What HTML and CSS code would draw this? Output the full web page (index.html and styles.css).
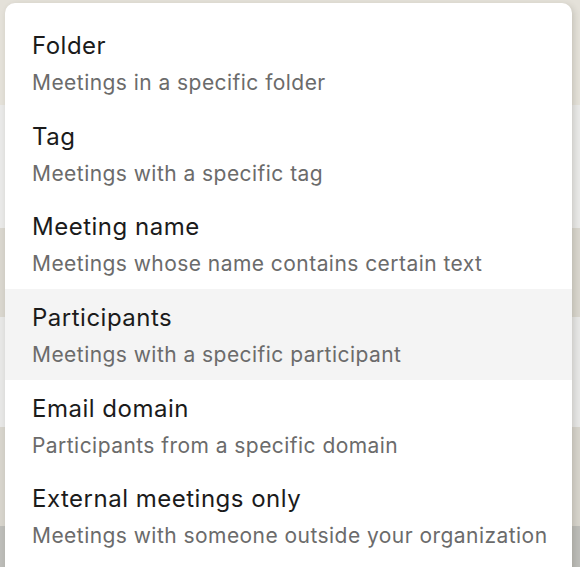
FILE: index.html
```html
<!DOCTYPE html>
<html lang="en">
<head>
  <meta charset="UTF-8">
  <meta name="viewport" content="width=device-width, initial-scale=1.0">
  <title>Filter menu</title>
  <link rel="stylesheet" href="styles.css">
</head>
<body>
  <div class="backdrop">
    <div class="band b1"></div>
    <div class="band b2"></div>
    <div class="band b3"></div>
    <div class="band b4"></div>
    <div class="band b5"></div>
    <div class="band b6"></div>
  </div>

  <ul class="menu">
    <li class="item">
      <div class="title">Folder</div>
      <div class="desc">Meetings in a specific folder</div>
    </li>
    <li class="item">
      <div class="title">Tag</div>
      <div class="desc">Meetings with a specific tag</div>
    </li>
    <li class="item">
      <div class="title">Meeting name</div>
      <div class="desc">Meetings whose name contains certain text</div>
    </li>
    <li class="item active">
      <div class="title">Participants</div>
      <div class="desc">Meetings with a specific participant</div>
    </li>
    <li class="item">
      <div class="title">Email domain</div>
      <div class="desc">Participants from a specific domain</div>
    </li>
    <li class="item">
      <div class="title">External meetings only</div>
      <div class="desc">Meetings with someone outside your organization</div>
    </li>
  </ul>
</body>
</html>
```

FILE: styles.css
```css
body {
  margin: 0;
  padding: 0;
  height: 567px;
  overflow: hidden;
  background: #e3e0d8;
  font-family: Inter, "Noto Sans", sans-serif;
  position: relative;
}

.backdrop {
  display: flex;
  flex-direction: column;
  height: 100%;
}

.band {
  width: 100%;
}

.b1 { height: 105px; background: #e4e1d9; }
.b2 { height: 123px; background: #e9e9e8; }
.b3 { height: 89px;  background: #d9d6ce; }
.b4 { height: 110px; background: #e7e7e6; }
.b5 { height: 99px;  background: #d7d4cc; }
.b6 { flex: 1;       background: #bdbdb9; }

/* dropdown sits over the page */
.menu {
  position: absolute;
  top: 3px;
  left: 5px;
  width: 567px;
  margin: 0;
  padding: 14px 0 20px;
  list-style: none;
  background: #fff;
  border-radius: 10px;
  box-shadow: 2px 2px 6px rgba(60, 55, 40, 0.18);
}

.item {
  height: 90.67px;
  padding: 13px 27px 0;
  box-sizing: border-box;
  white-space: nowrap;
}

.item.active {
  background: #f4f4f4;
}

.title {
  font-size: 24px;
  line-height: 32px;
  letter-spacing: 0.5px;
  color: #1b1b1b;
}

.desc {
  font-size: 21px;
  line-height: 41px;
  letter-spacing: 0.45px;
  color: #6b6b6b;
}
```
